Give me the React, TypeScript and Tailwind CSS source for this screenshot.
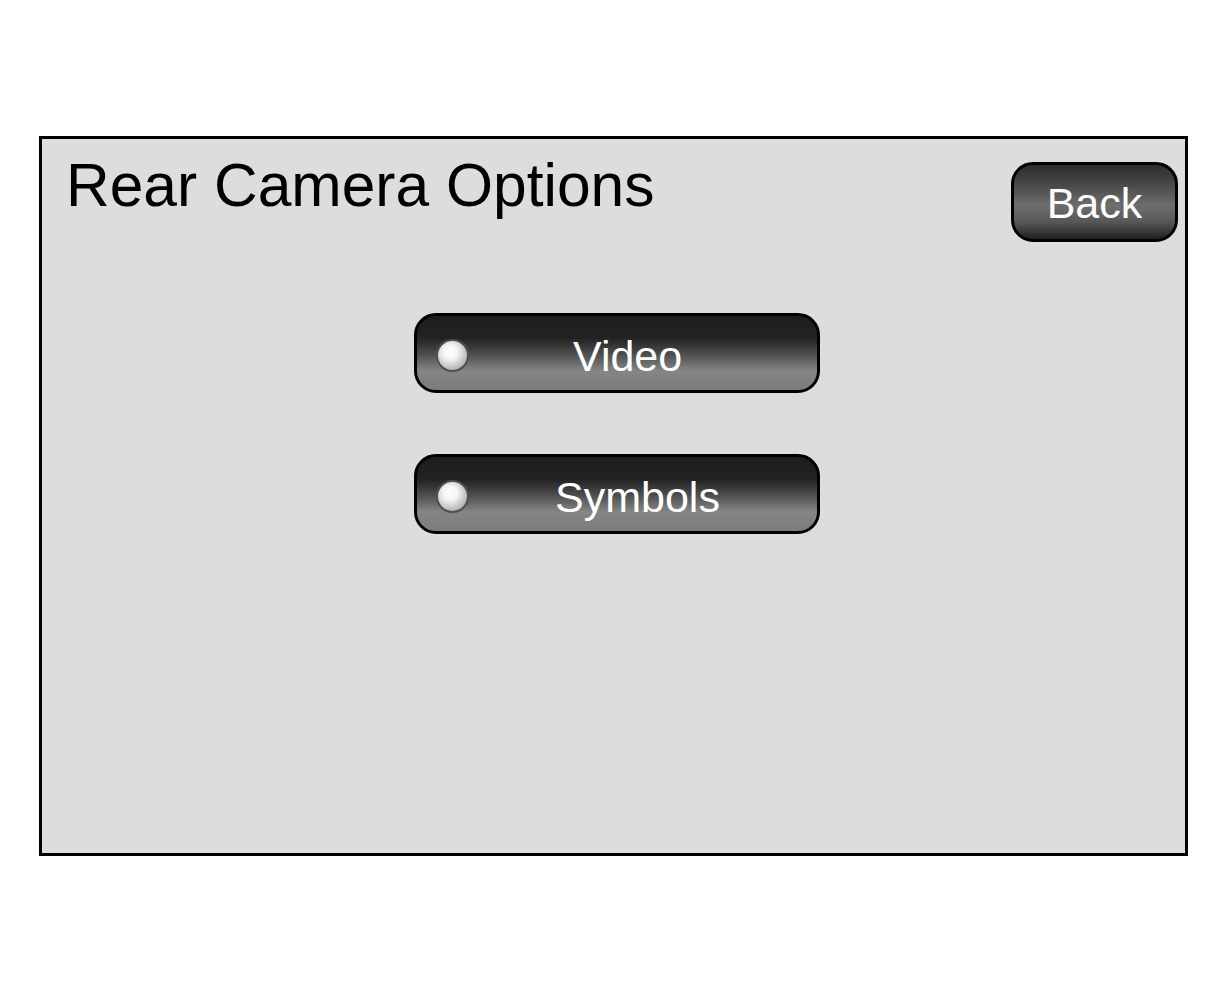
import React from "react";

function Radio() {
  return (
    <div className="w-[33px] h-[33px] mt-[4px] shrink-0 rounded-full border-2 border-[#505050] bg-[radial-gradient(circle_at_42%_38%,#ffffff_0%,#f6f6f6_28%,#c4c4c4_62%,#8c8c8c_100%)]" />
  );
}

function OptionButton({ label, textClass }: { label: string; textClass: string }) {
  return (
    <div className="flex items-center w-[406px] h-[80px] rounded-[22px] border-[3px] border-black bg-[linear-gradient(to_bottom,#1d1d1d_0%,#222222_30%,#4e4e4e_52%,#858585_74%,#7c7c7c_100%)] pl-[19px]">
      <Radio />
      <span className={`text-white text-[43px] leading-none pt-[7px] ${textClass}`}>{label}</span>
    </div>
  );
}

export default function App() {
  return (
    <div className="w-[1230px] h-[993px] bg-white pt-[136px] pl-[39px]" style={{ fontFamily: '"Liberation Sans", Arial, sans-serif' }}>
      <div className="w-[1149px] h-[720px] border-[3px] border-black bg-[#dddddd] flex flex-col">
        <div className="flex items-start justify-between pl-[24px] pr-[7px]">
          <h1 className="mt-[16px] text-[60.5px] leading-none text-black">Rear Camera Options</h1>
          <div className="mt-[23px] w-[167px] h-[80px] rounded-[22px] border-[3px] border-black bg-[linear-gradient(to_bottom,#2c2c2c_0%,#4a4a4a_28%,#6e6e6e_55%,#555555_78%,#1f1f1f_100%)] flex items-center justify-center">
            <span className="text-white text-[43px] leading-none pt-[2px]">Back</span>
          </div>
        </div>
        <div className="mt-[71px] ml-[372px] flex flex-col gap-[61px]">
          <OptionButton label="Video" textClass="ml-[104px]" />
          <OptionButton label="Symbols" textClass="ml-[86px]" />
        </div>
      </div>
    </div>
  );
}
